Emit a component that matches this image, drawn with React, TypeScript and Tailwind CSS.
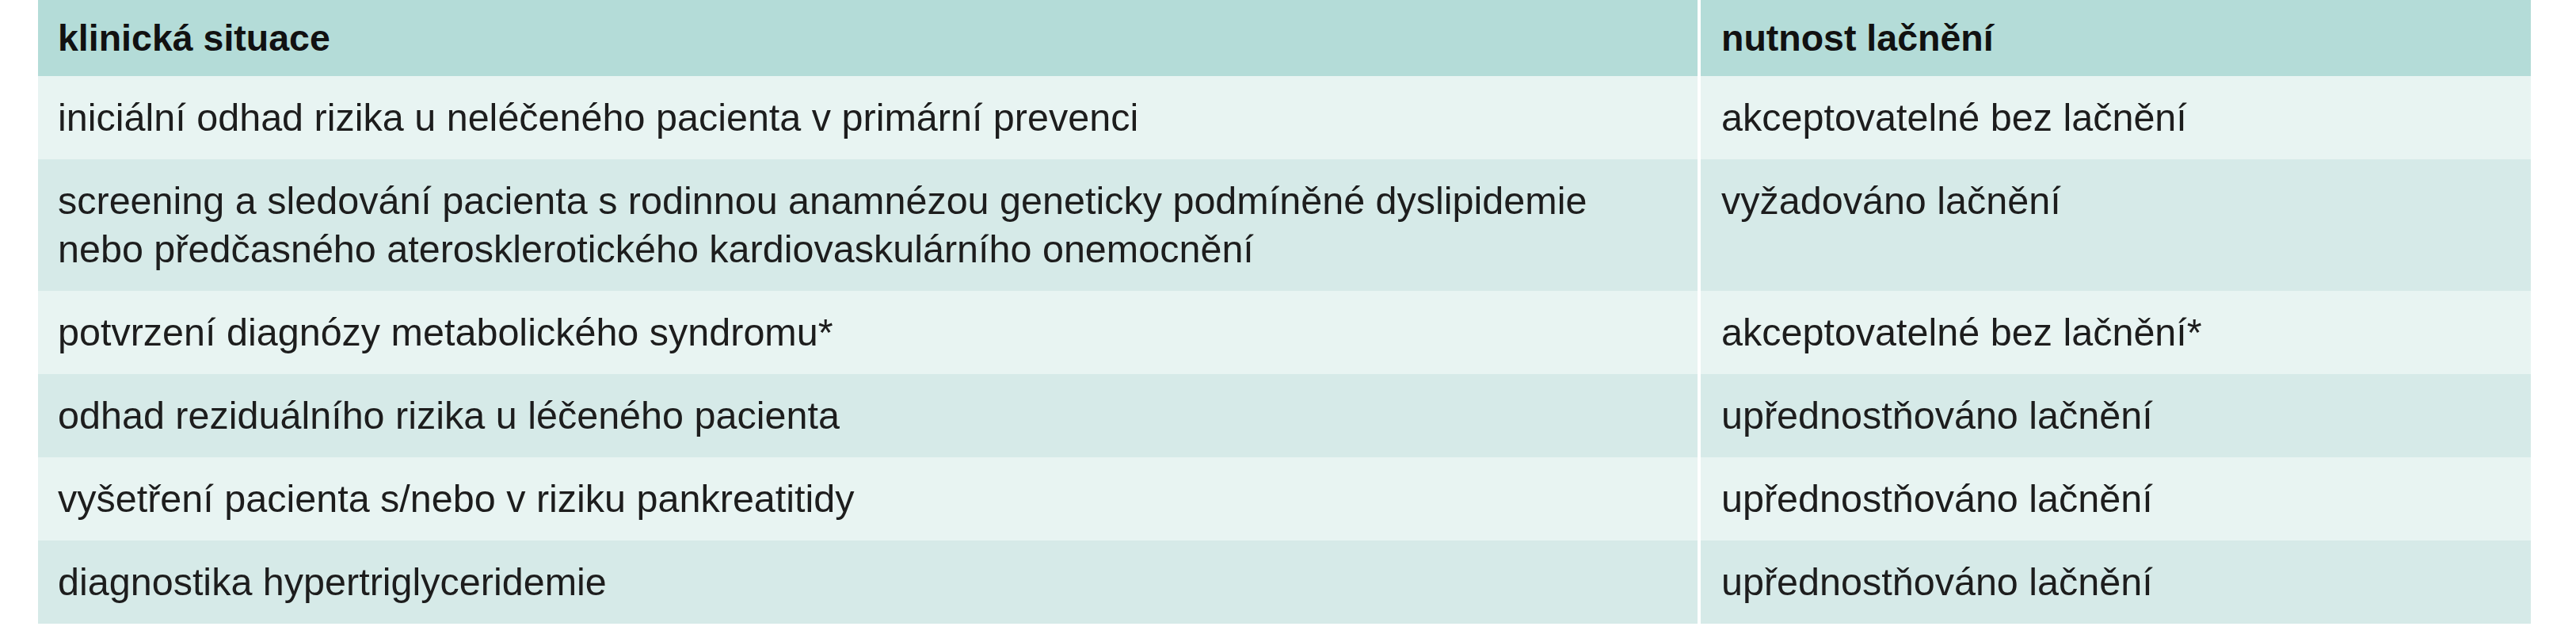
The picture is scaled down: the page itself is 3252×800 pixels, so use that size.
import React from "react";

const rows: { situation: string; fasting: string }[] = [
  {
    situation: "iniciální odhad rizika u neléčeného pacienta v primární prevenci",
    fasting: "akceptovatelné bez lačnění",
  },
  {
    situation:
      "screening a sledování pacienta s rodinnou anamnézou geneticky podmíněné dyslipidemie nebo předčasného aterosklerotického kardiovaskulárního onemocnění",
    fasting: "vyžadováno lačnění",
  },
  {
    situation: "potvrzení diagnózy metabolického syndromu*",
    fasting: "akceptovatelné bez lačnění*",
  },
  {
    situation: "odhad reziduálního rizika u léčeného pacienta",
    fasting: "upřednostňováno lačnění",
  },
  {
    situation: "vyšetření pacienta s/nebo v riziku pankreatitidy",
    fasting: "upřednostňováno lačnění",
  },
  {
    situation: "diagnostika hypertriglyceridemie",
    fasting: "upřednostňováno lačnění",
  },
];

const App = () => {
  return (
    <div className="min-h-[800px] w-[3252px] bg-white pl-[48px] font-['Liberation_Sans',Arial,sans-serif] text-[48.5px] leading-[61px] text-[#1d1d1d]">
      <div className="grid w-[3147px] grid-cols-[2095px_1048px] gap-x-[4px]">
        <div className="bg-[#b4dcd8] pl-[25px] pr-[40px] py-[17.5px] text-[46.5px] font-bold text-[#111]">
          klinická situace
        </div>
        <div className="bg-[#b4dcd8] pl-[26px] pr-[25px] py-[17.5px] text-[46.5px] font-bold text-[#111]">
          nutnost lačnění
        </div>

        {rows.map((r, i) => {
          const bg = i % 2 === 0 ? "bg-[#e8f4f2]" : "bg-[#d6eae8]";
          return (
            <React.Fragment key={i}>
              <div className={`${bg} pl-[25px] pr-[40px] py-[22px]`}>{r.situation}</div>
              <div className={`${bg} pl-[26px] pr-[25px] py-[22px]`}>{r.fasting}</div>
            </React.Fragment>
          );
        })}
      </div>
    </div>
  );
};

export default App;
